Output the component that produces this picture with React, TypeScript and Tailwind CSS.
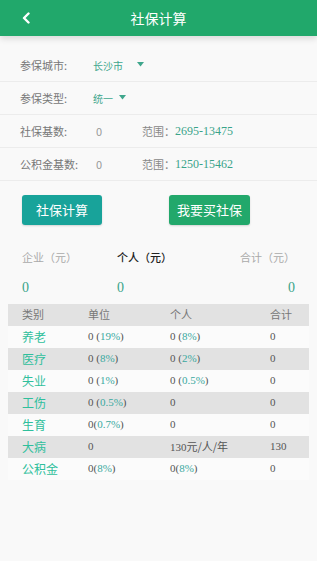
import React from "react";

const sans = { fontFamily: '"Noto Sans CJK SC", "Noto Sans", sans-serif' };
const serif = { fontFamily: '"Liberation Serif", "Noto Sans CJK SC", serif' };

function Pct({ a, p, tight }: { a: string; p?: string; tight?: boolean }) {
  return (
    <span style={serif} className="text-[11px] text-[#555]">
      {a}
      {p !== undefined && (
        <>
          {tight ? "" : " "}(<span className="text-[#3aa9a0]">{p}</span>)
        </>
      )}
    </span>
  );
}

const rows: { name: string; unit: React.ReactNode; person: React.ReactNode; total: string; gray: boolean }[] = [
  { name: "养老", unit: <Pct a="0" p="19%" />, person: <Pct a="0" p="8%" />, total: "0", gray: false },
  { name: "医疗", unit: <Pct a="0" p="8%" />, person: <Pct a="0" p="2%" />, total: "0", gray: true },
  { name: "失业", unit: <Pct a="0" p="1%" />, person: <Pct a="0" p="0.5%" />, total: "0", gray: false },
  { name: "工伤", unit: <Pct a="0" p="0.5%" />, person: <Pct a="0" />, total: "0", gray: true },
  { name: "生育", unit: <Pct a="0" p="0.7%" tight />, person: <Pct a="0" />, total: "0", gray: false },
  {
    name: "大病",
    unit: <Pct a="0" />,
    person: (
      <span className="text-[11px] text-[#555]">
        <span style={serif}>130</span>
        <span style={sans}>元/人/年</span>
      </span>
    ),
    total: "130",
    gray: true,
  },
  { name: "公积金", unit: <Pct a="0" p="8%" tight />, person: <Pct a="0" p="8%" tight />, total: "0", gray: false },
];

function Tri() {
  return (
    <svg width="7" height="5" viewBox="0 0 7 5">
      <path d="M0 0 L7 0 L3.5 4.5 Z" fill="#3fa68c" />
    </svg>
  );
}

export default function App() {
  return (
    <div style={sans} className="w-[317px] h-[561px] bg-[#f9f9f9] overflow-hidden">
      <div className="relative h-[36px] bg-[#21a86b] flex items-center justify-center shadow-[0_3px_6px_rgba(0,0,0,0.12)]">
        <svg className="absolute left-[21px] top-[12px]" width="10" height="12" viewBox="0 0 10 12">
          <path d="M7.5 1.5 L3 6 L7.5 10.5" stroke="#ffffff" strokeWidth="2.4" fill="none" strokeLinecap="round" strokeLinejoin="round" />
        </svg>
        <span className="text-white text-[14px]">社保计算</span>
      </div>

      <div className="mt-[13px]">
        <div className="h-[33px] flex items-center border-b border-[#ececec]">
          <span className="pl-[20px] w-[93px] text-[11px] text-[#777]">参保城市:</span>
          <span className="text-[10px] text-[#3fa68c]">长沙市</span>
          <span className="ml-[14px] mb-[1px]"><Tri /></span>
        </div>
        <div className="h-[33px] flex items-center border-b border-[#ececec]">
          <span className="pl-[20px] w-[93px] text-[11px] text-[#777]">参保类型:</span>
          <span className="text-[10px] text-[#3fa68c]">统一</span>
          <span className="ml-[6px] mb-[1px]"><Tri /></span>
        </div>
        <div className="h-[33px] flex items-center border-b border-[#ececec]">
          <span className="pl-[20px] w-[96px] text-[11px] text-[#777]">社保基数:</span>
          <span className="w-[46px] text-[11px] text-[#999]">0</span>
          <span className="text-[11px] text-[#888]">范围：</span>
          <span style={serif} className="text-[12px] text-[#3aa489]">2695-13475</span>
        </div>
        <div className="h-[33px] flex items-center border-b border-[#ececec]">
          <span className="pl-[20px] w-[96px] text-[11px] text-[#777]">公积金基数:</span>
          <span className="w-[46px] text-[11px] text-[#999]">0</span>
          <span className="text-[11px] text-[#888]">范围：</span>
          <span style={serif} className="text-[12px] text-[#3aa489]">1250-15462</span>
        </div>
      </div>

      <div className="flex mt-[14px] pl-[22px]">
        <div className="w-[80px] h-[30px] rounded-[3px] bg-[#18a39a] text-white text-[13px] flex items-center justify-center shadow-[0_1px_2px_rgba(0,0,0,0.15)]">
          社保计算
        </div>
        <div className="ml-[67px] w-[81px] h-[30px] rounded-[3px] bg-[#22a86b] text-white text-[13px] flex items-center justify-center shadow-[0_1px_2px_rgba(0,0,0,0.15)]">
          我要买社保
        </div>
      </div>

      <div className="mt-[24px] flex px-[22px] text-[11px]">
        <span className="w-[95px] text-[#aaa]">企业（元）</span>
        <span className="text-[#222] font-medium">个人（元）</span>
        <span className="ml-auto text-[#aaa]">合计（元）</span>
      </div>
      <div style={serif} className="mt-[11px] flex px-[22px] text-[14px] text-[#3aa489]">
        <span className="w-[95px]">0</span>
        <span>0</span>
        <span className="ml-auto mr-[0px]">0</span>
      </div>

      <div className="mt-[6px] mx-[8px] w-[301px]">
        <div className="h-[22px] bg-[#e2e2e2] flex items-center text-[11px] text-[#777]">
          <span className="pl-[14px] w-[80px]">类别</span>
          <span className="w-[82px]">单位</span>
          <span className="w-[100px]">个人</span>
          <span>合计</span>
        </div>
        {rows.map((r) => (
          <div key={r.name} className={`h-[22px] flex items-center ${r.gray ? "bg-[#e2e2e2]" : "bg-[#fbfbfb]"}`}>
            <span className="pl-[14px] w-[80px] text-[12px] text-[#2fbf9c]">{r.name}</span>
            <span className="w-[82px] flex items-center">{r.unit}</span>
            <span className="w-[100px] flex items-center">{r.person}</span>
            <span style={serif} className="text-[11px] text-[#555]">{r.total}</span>
          </div>
        ))}
      </div>
    </div>
  );
}
